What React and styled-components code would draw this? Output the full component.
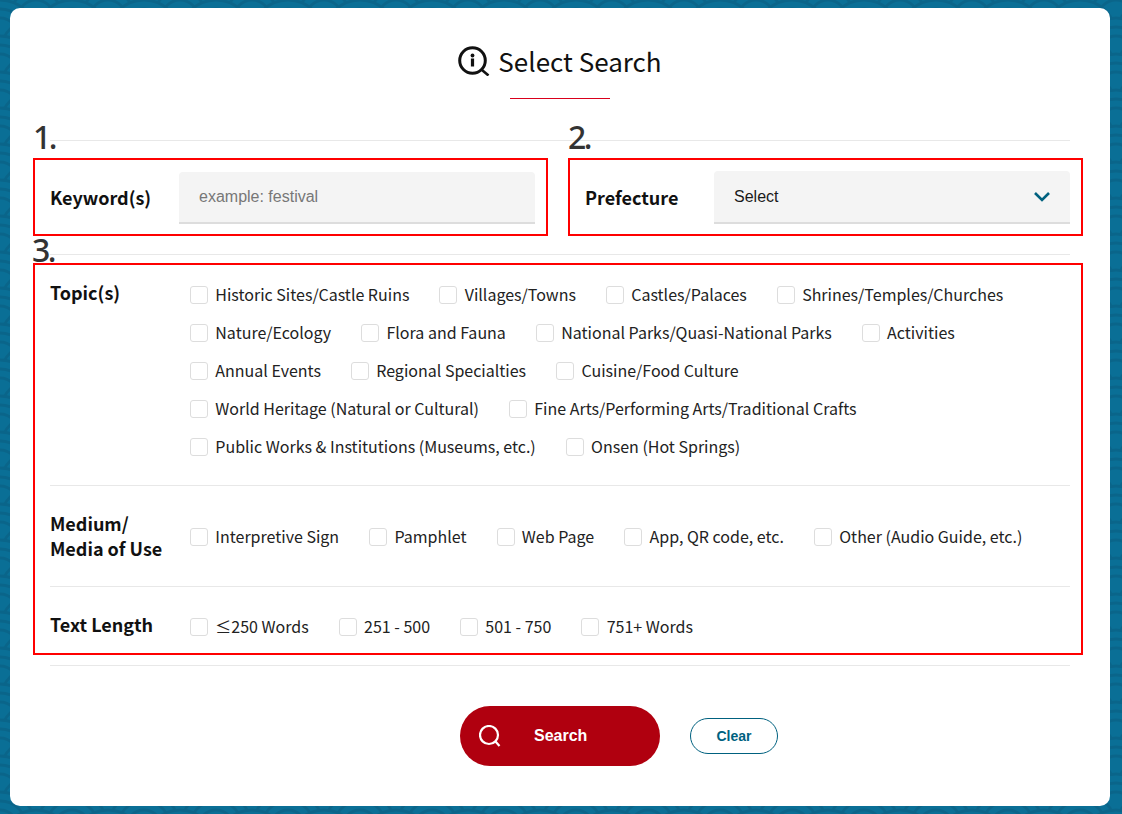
import React from "react";
import styled, { createGlobalStyle } from "styled-components";

const scale = (cx, cy) => `<g transform="translate(${cx} ${cy})"><circle r="36" fill="#0a6f96" stroke="#0a658a" stroke-width="2.8"/><circle r="27" fill="none" stroke="#0a658a" stroke-width="2.8"/><circle r="18" fill="none" stroke="#0a658a" stroke-width="2.8"/></g>`;
const rows = [0, 18, 36, 54, 72]
  .map((y, i) => (i % 2 === 0 ? scale(0, y) + scale(72, y) : scale(36, y)))
  .join("");
const tile = encodeURIComponent(`<svg xmlns="http://www.w3.org/2000/svg" width="72" height="36" viewBox="0 0 72 36">${rows}</svg>`);

const Global = createGlobalStyle`
  html, body { margin: 0; padding: 0; }
  body {
    background-color: #0a6f96;
    background-image: url("data:image/svg+xml,${tile}");
    font-family: "Noto Sans CJK JP", "Noto Sans", sans-serif;
    color: #1a1a1a;
  }
  * { box-sizing: border-box; }
`;

const Page = styled.div`
  width: 1122px;
  height: 814px;
  padding: 8px 12px 8px 10px;
  overflow: hidden;
`;

const Card = styled.main`
  background: #fff;
  border-radius: 10px;
  height: 798px;
  padding: 0 40px;
`;

const Header = styled.header`
  height: 133px;
  border-bottom: 1px solid #e8e8e8;
  padding-top: 33px;
  display: flex;
  flex-direction: column;
  align-items: center;
  position: relative;
`;

const Title = styled.h1`
  margin: 0;
  display: flex;
  align-items: center;
  gap: 8px;
  height: 40px;
  font-size: 26px;
  line-height: 40px;
  font-weight: 400;
  color: #111;
`;

const TitleRule = styled.span`
  display: block;
  width: 100px;
  height: 1px;
  background: #d9001b;
  margin-top: 17px;
`;

const Numeral = styled.span`
  position: absolute;
  left: ${(p) => p.$left}px;
  top: ${(p) => p.$top}px;
  font-family: "Noto Sans", sans-serif;
  font-size: 32px;
  line-height: 32px;
  font-weight: 500;
  letter-spacing: -2.5px;
  color: #333;
  z-index: 2;
`;

const TopRow = styled.section`
  display: grid;
  grid-template-columns: 485px 485px;
  column-gap: 50px;
  padding: 30px 0;
  border-bottom: 1px solid #e8e8e8;
  height: 114px;
`;

const Field = styled.div`
  position: relative;
  display: flex;
  align-items: center;
  height: 53px;
`;

const RedBox = styled.span`
  position: absolute;
  top: ${(p) => p.$top}px;
  right: -13px;
  bottom: ${(p) => p.$bottom}px;
  left: -17px;
  border: 2px solid #f00;
  pointer-events: none;
`;

const FieldLabel = styled.label`
  width: ${(p) => p.$width}px;
  flex: none;
  font-size: 18px;
  line-height: 25px;
  font-weight: 700;
  color: #111;
`;

const TextInput = styled.input`
  flex: 1;
  min-width: 0;
  height: 52px;
  border: 0;
  border-bottom: 2px solid #ddd;
  border-radius: 4px 4px 0 0;
  background: #f4f4f4;
  padding: 0 20px;
  font-family: "Liberation Sans", Arial, sans-serif;
  font-size: 16px;
  &::placeholder { color: #777; opacity: 1; }
`;

const SelectWrap = styled.div`
  position: relative;
  flex: 1;
  min-width: 0;
`;

const Select = styled.select`
  appearance: none;
  display: block;
  width: 100%;
  height: 53px;
  border: 0;
  border-bottom: 2px solid #ddd;
  border-radius: 4px 4px 0 0;
  background: #f4f4f4;
  padding: 0 20px;
  font-family: "Liberation Sans", Arial, sans-serif;
  font-size: 16px;
  color: #1a1a1a;
`;

const Chevron = styled.svg`
  position: absolute;
  right: 19px;
  top: 20px;
  pointer-events: none;
`;

const Filters = styled.section`
  position: relative;
  border-bottom: 1px solid #e8e8e8;
`;

const FilterRow = styled.div`
  display: grid;
  grid-template-columns: 140px 1fr;
  align-items: ${(p) => p.$align || "center"};
  padding: ${(p) => p.$padding};
  border-bottom: ${(p) => (p.$last ? "0" : "1px solid #e8e8e8")};
`;

const FilterLabel = styled.div`
  font-size: 18px;
  line-height: 25px;
  font-weight: 700;
  color: #111;
  margin-top: ${(p) => p.$offset || 0}px;
`;

const Options = styled.div`
  display: flex;
  column-gap: 30px;
  padding-top: ${(p) => p.$nudge || 0}px;
`;

const Option = styled.label`
  display: flex;
  align-items: center;
  gap: 7.3px;
  height: 38px;
  font-size: 16px;
  line-height: 24px;
  color: #222;
  white-space: nowrap;
`;

const OptionText = styled.span`
  margin-bottom: 2px;
`;

const Check = styled.input.attrs({ type: "checkbox" })`
  appearance: none;
  margin: 0;
  width: 18px;
  height: 18px;
  border: 1px solid #ddd;
  border-radius: 3px;
  background: #fff;
`;

const Actions = styled.div`
  display: grid;
  grid-template-columns: 1fr auto 1fr;
  align-items: center;
  column-gap: 30px;
  padding-top: 40px;
`;

const SearchButton = styled.button`
  grid-column: 2;
  width: 200px;
  height: 60px;
  border: 0;
  border-radius: 30px;
  background: #b0000f;
  color: #fff;
  font-family: "Liberation Sans", Arial, sans-serif;
  font-size: 16px;
  font-weight: 700;
  display: flex;
  align-items: center;
  padding: 0 0 0 19px;
  gap: 33px;
`;

const ClearButton = styled.button`
  justify-self: start;
  width: 88px;
  height: 36px;
  border: 1px solid #00617f;
  border-radius: 18px;
  background: #fff;
  color: #00617f;
  font-family: "Liberation Sans", Arial, sans-serif;
  font-size: 14px;
  font-weight: 700;
`;

const topics = [
  ["Historic Sites/Castle Ruins", "Villages/Towns", "Castles/Palaces", "Shrines/Temples/Churches"],
  ["Nature/Ecology", "Flora and Fauna", "National Parks/Quasi-National Parks", "Activities"],
  ["Annual Events", "Regional Specialties", "Cuisine/Food Culture"],
  ["World Heritage (Natural or Cultural)", "Fine Arts/Performing Arts/Traditional Crafts"],
  ["Public Works & Institutions (Museums, etc.)", "Onsen (Hot Springs)"],
];
const media = ["Interpretive Sign", "Pamphlet", "Web Page", "App, QR code, etc.", "Other (Audio Guide, etc.)"];
const lengths = ["≤250 Words", "251 - 500", "501 - 750", "751+ Words"];

const OptionList = ({ items, nudge }) => (
  <Options $nudge={nudge}>
    {items.map((t) => (
      <Option key={t}>
        <Check />
        <OptionText>{t}</OptionText>
      </Option>
    ))}
  </Options>
);

export default function App() {
  return (
    <Page>
      <Global />
      <Card>
        <Header>
          <Title>
            <svg width="32" height="30" viewBox="0 0 32 30" fill="none" stroke="#111">
              <circle cx="14.5" cy="14.5" r="12.8" strokeWidth="3" />
              <path d="M24 24 L30.5 29.5" strokeWidth="2.6" />
              <circle cx="14.5" cy="9.5" r="1.9" fill="#111" stroke="none" />
              <path d="M14.5 12.5 V20.5" strokeWidth="3.2" />
            </svg>
            Select Search
          </Title>
          <TitleRule />
          <Numeral $left={-17} $top={113}>1.</Numeral>
          <Numeral $left={518} $top={113}>2.</Numeral>
        </Header>
        <TopRow>
          <Field>
            <RedBox $top={-13} $bottom={-12} />
            <FieldLabel $width={129}>Keyword(s)</FieldLabel>
            <TextInput placeholder="example: festival" />
          </Field>
          <Field>
            <RedBox $top={-13} $bottom={-12} />
            <FieldLabel $width={129}>Prefecture</FieldLabel>
            <SelectWrap>
              <Select defaultValue="">
                <option value="">Select</option>
              </Select>
              <Chevron width="18" height="12" viewBox="0 0 18 12" fill="none" stroke="#00617f" strokeWidth="2.6">
                <path d="M2 2 L9 9 L16 2" />
              </Chevron>
            </SelectWrap>
          </Field>
        </TopRow>
        <Filters>
          <Numeral $left={-18} $top={-21}>3.</Numeral>
          <RedBox $top={8} $bottom={10} />
          <FilterRow $align="start" $padding="21px 0 19px">
            <FilterLabel $offset={4}>Topic(s)</FilterLabel>
            <div>
              {topics.map((line) => (
                <OptionList key={line[0]} items={line} />
              ))}
            </div>
          </FilterRow>
          <FilterRow $padding="25px 0 25px">
            <FilterLabel>Medium/<br />Media of Use</FilterLabel>
            <OptionList items={media} nudge={2} />
          </FilterRow>
          <FilterRow $last $padding="21px 0 19px">
            <FilterLabel $offset={-6}>Text Length</FilterLabel>
            <OptionList items={lengths} />
          </FilterRow>
        </Filters>
        <Actions>
          <SearchButton>
            <svg width="22" height="22" viewBox="0 0 22 22" fill="none" stroke="#fff" strokeWidth="2.2">
              <circle cx="10" cy="10" r="9" />
              <path d="M16.5 16.5 L20.5 21" />
            </svg>
            Search
          </SearchButton>
          <ClearButton>Clear</ClearButton>
        </Actions>
      </Card>
    </Page>
  );
}
